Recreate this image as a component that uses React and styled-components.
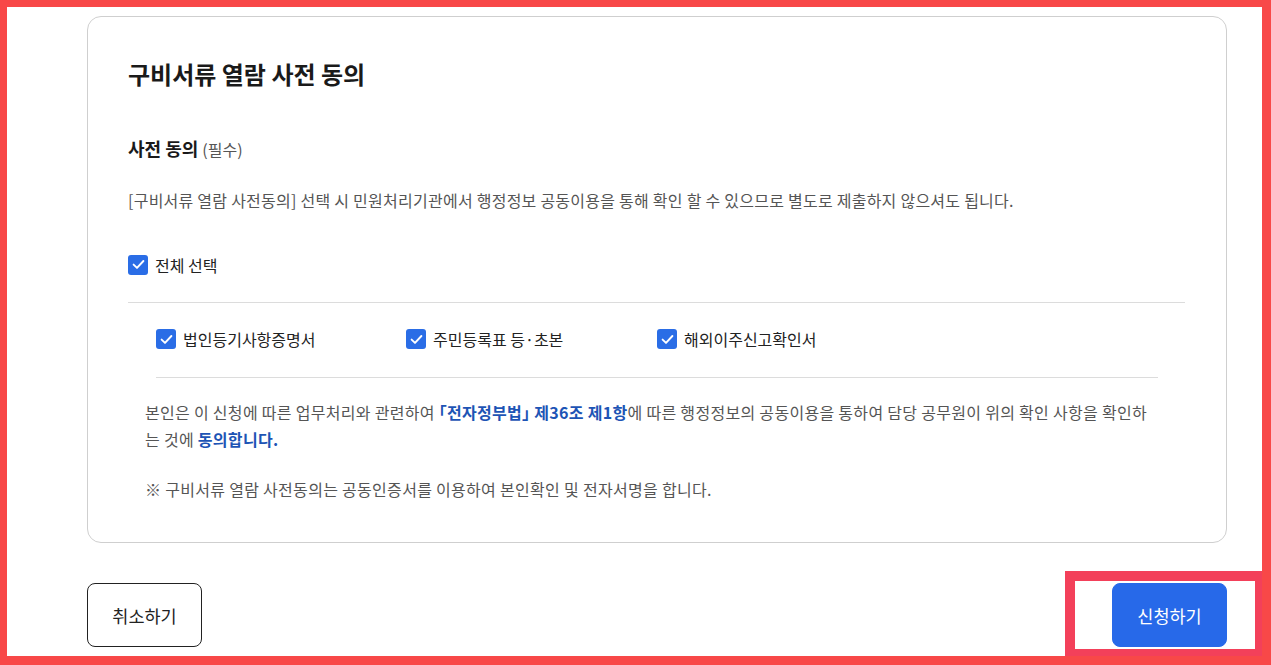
import React from "react";
import styled, { createGlobalStyle } from "styled-components";

const Global = createGlobalStyle`
  html, body { margin: 0; padding: 0; background: #fff; }
  body {
    font-family: "Noto Sans CJK KR", "Noto Sans", sans-serif;
    color: #222;
    -webkit-font-smoothing: antialiased;
  }
  * { box-sizing: border-box; }
`;

const Page = styled.div`
  position: relative;
  width: 1271px;
  height: 665px;
  overflow: hidden;
  padding: 16px 44px 0 87px;
`;

const Frame = styled.div`
  position: absolute;
  inset: 0;
  border-style: solid;
  border-color: #f84848;
  border-width: 7px 9px 9px 7px;
  pointer-events: none;
  z-index: 3;
`;

const Highlight = styled.div`
  position: absolute;
  left: 1065px;
  top: 571px;
  right: 6px;
  bottom: 6px;
  border: 10px solid #f3405a;
  pointer-events: none;
  z-index: 2;
`;

const Card = styled.section`
  width: 1140px;
  border: 1px solid #cfcfcf;
  border-radius: 14px;
  padding: 40px 41px 39px 40px;
`;

const Title = styled.h2`
  margin: 0;
  font-size: 24px;
  line-height: 34px;
  font-weight: 700;
  color: #1a1a1a;
`;

const SectionTitle = styled.h3`
  margin: 45px 0 0;
  font-size: 18px;
  line-height: 24px;
  font-weight: 700;
  color: #1a1a1a;
`;

const Required = styled.span`
  font-size: 16px;
  font-weight: 400;
  color: #555;
  margin-left: 4px;
`;

const Desc = styled.p`
  margin: 28px 0 0;
  font-size: 16px;
  line-height: 22px;
  letter-spacing: 0.25px;
  color: #555;
`;

const CheckLabel = styled.label`
  display: inline-flex;
  align-items: center;
  gap: 7px;
  font-size: 16px;
  line-height: 20px;
  color: #222;
  cursor: pointer;
`;

const Box = styled.span`
  width: 20px;
  height: 20px;
  border-radius: 3px;
  background: #2a6de6;
  display: inline-flex;
  align-items: center;
  justify-content: center;
  flex-shrink: 0;
`;

const AllRow = styled.div`
  margin-top: 40px;
  padding-bottom: 27px;
  border-bottom: 1px solid #dcdcdc;
`;

const Sub = styled.div`
  padding: 0 27px 0 28px;
`;

const ItemRow = styled.div`
  display: grid;
  grid-template-columns: 250px 251px 250px;
  margin-top: 26px;
  padding-bottom: 28px;
  border-bottom: 1px solid #dcdcdc;
`;

const Text = styled.p`
  margin: ${(p) => p.$mt}px 0 0;
  padding: 0 30px 0 17px;
  font-size: 16px;
  line-height: 27px;
  letter-spacing: 0.3px;
  word-break: break-all;
  color: #555;
`;

const Em = styled.strong`
  color: #1d54b5;
  font-weight: 700;
`;

const Actions = styled.div`
  display: flex;
  justify-content: space-between;
  width: 1140px;
  margin-top: 40px;
`;

const Button = styled.button`
  width: 115px;
  height: 64px;
  border-radius: 8px;
  font-family: inherit;
  font-size: 17.5px;
  cursor: pointer;
  border: 1px solid ${(p) => (p.$primary ? "#2769e9" : "#222")};
  background: ${(p) => (p.$primary ? "#2769e9" : "#fff")};
  color: ${(p) => (p.$primary ? "#fff" : "#222")};
`;

const Check = ({ children }) => (
  <CheckLabel>
    <Box>
      <svg width="13" height="11" viewBox="0 0 13 11" fill="none">
        <path d="M1.6 5.6 L5 8.9 L11.4 2" stroke="#fff" strokeWidth="1.9" strokeLinecap="round" strokeLinejoin="round" />
      </svg>
    </Box>
    {children}
  </CheckLabel>
);

export default function App() {
  return (
    <Page>
      <Global />
      <Card>
        <Title>구비서류 열람 사전 동의</Title>
        <SectionTitle>
          사전 동의<Required>(필수)</Required>
        </SectionTitle>
        <Desc>
          [구비서류 열람 사전동의] 선택 시 민원처리기관에서 행정정보 공동이용을 통해 확인 할 수 있으므로 별도로 제출하지 않으셔도 됩니다.
        </Desc>
        <AllRow>
          <Check>전체 선택</Check>
        </AllRow>
        <Sub>
          <ItemRow>
            <Check>법인등기사항증명서</Check>
            <Check>주민등록표 등·초본</Check>
            <Check>해외이주신고확인서</Check>
          </ItemRow>
        </Sub>
        <Text $mt={21}>
          본인은 이 신청에 따른 업무처리와 관련하여 <Em>｢전자정부법｣ 제36조 제1항</Em>에 따른 행정정보의 공동이용을 통하여 담당 공무원이 위의 확인 사항을 확인하는 것에 <Em>동의합니다.</Em>
        </Text>
        <Text $mt={23}>※ 구비서류 열람 사전동의는 공동인증서를 이용하여 본인확인 및 전자서명을 합니다.</Text>
      </Card>
      <Actions>
        <Button>취소하기</Button>
        <Button $primary>신청하기</Button>
      </Actions>
      <Highlight />
      <Frame />
    </Page>
  );
}
